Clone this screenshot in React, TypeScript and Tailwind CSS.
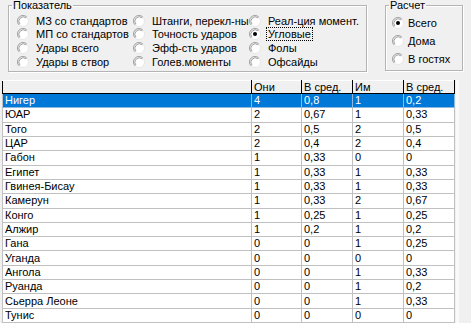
import React from "react";

const rows = [
  ["Нигер", "4", "0,8", "1", "0,2"],
  ["ЮАР", "2", "0,67", "1", "0,33"],
  ["Того", "2", "0,5", "2", "0,5"],
  ["ЦАР", "2", "0,4", "2", "0,4"],
  ["Габон", "1", "0,33", "0", "0"],
  ["Египет", "1", "0,33", "1", "0,33"],
  ["Гвинея-Бисау", "1", "0,33", "1", "0,33"],
  ["Камерун", "1", "0,33", "2", "0,67"],
  ["Конго", "1", "0,25", "1", "0,25"],
  ["Алжир", "1", "0,2", "1", "0,2"],
  ["Гана", "0", "0", "1", "0,25"],
  ["Уганда", "0", "0", "0", "0"],
  ["Ангола", "0", "0", "1", "0,33"],
  ["Руанда", "0", "0", "1", "0,2"],
  ["Сьерра Леоне", "0", "0", "1", "0,33"],
  ["Тунис", "0", "0", "0", "0"],
];

const Radio = ({checked = false}: {checked?: boolean}) => (
  <svg width="12" height="12" viewBox="0 0 12 12" className="shrink-0">
    <circle cx="6" cy="6" r="5.5" fill="#ffffff" stroke="#e6e6e6" strokeWidth="1" />
    <path d="M2.1 9.9 A5.5 5.5 0 0 1 9.9 2.1" fill="none" stroke="#a0a0a0" strokeWidth="1" />
    <path d="M2.9 9.1 A4.4 4.4 0 0 1 9.1 2.9" fill="none" stroke="#8a8a8a" strokeWidth="0.8" />
    {checked && <circle cx="6" cy="6" r="2" fill="#000000" />}
  </svg>
);

const Option = ({label, checked, focus}: {label: string; checked?: boolean; focus?: boolean}) => (
  <div className="flex items-center h-[13.6px] leading-[12px] whitespace-nowrap">
    <Radio checked={checked} />
    <span className={focus ? "ml-[6px] px-[1px] outline outline-1 outline-dotted outline-black" : "ml-[7px]"}>
      {label}
    </span>
  </div>
);

const col1 = ["МЗ со стандартов", "МП со стандартов", "Удары всего", "Удары в створ"];
const col2 = ["Штанги, перекл-ны", "Точность ударов", "Эфф-сть ударов", "Голев.моменты"];
const col3 = ["Реал-ция момент.", "Угловые", "Фолы", "Офсайды"];

export default function App() {
  return (
    <div
      className="w-[471px] h-[323px] bg-[#f0f0f0] overflow-hidden text-[11px] text-black"
      style={{fontFamily: '"Liberation Sans", Arial, sans-serif'}}
    >
      <div className="flex h-[80px]">
        <fieldset className="ml-[8px] w-[359px] h-[72px] border border-[#b4b4b4] shadow-[inset_1px_1px_0_#ffffff,1px_1px_0_#ffffff]">
          <legend className="ml-[3px] px-[1px] leading-[11px]">Показатель</legend>
          <div className="grid grid-cols-[116px_116px_110px] pl-[8px] pt-[3px]">
            <div>
              {col1.map((l) => (
                <Option key={l} label={l} />
              ))}
            </div>
            <div>
              {col2.map((l) => (
                <Option key={l} label={l} />
              ))}
            </div>
            <div>
              {col3.map((l, i) => (
                <Option key={l} label={l} checked={i === 1} focus={i === 1} />
              ))}
            </div>
          </div>
        </fieldset>
        <fieldset className="ml-[18px] w-[78px] h-[71px] border border-[#b4b4b4] shadow-[inset_1px_1px_0_#ffffff,1px_1px_0_#ffffff]">
          <legend className="ml-[3px] px-[1px] leading-[11px]">Расчет</legend>
          <div className="flex flex-col gap-[5px] pl-[6px] pt-[5px]">
            {["Всего", "Дома", "В гостях"].map((l, i) => (
              <div key={l} className="flex items-center h-[13px] leading-[12px] whitespace-nowrap">
                <Radio checked={i === 0} />
                <span className="ml-[4px]">{l}</span>
              </div>
            ))}
          </div>
        </fieldset>
      </div>

      <div className="flex">
        <table className="ml-[2px] border-collapse table-fixed w-[452px] bg-white">
          <colgroup>
            <col className="w-[249px]" />
            <col className="w-[50px]" />
            <col className="w-[51px]" />
            <col className="w-[51px]" />
            <col className="w-[51px]" />
          </colgroup>
          <thead>
            <tr className="h-[13px] bg-[#f0f0f0]">
              {["", "Они", "В сред.", "Им", "В сред."].map((h, i) => (
                <th
                  key={i}
                  className={
                    "p-0 pl-[2px] text-left font-normal leading-[12px] border-t border-t-white border-b border-b-black border-r border-r-black " +
                    (i === 0 ? "border-l border-l-black" : "border-l border-l-white")
                  }
                >
                  {h}
                </th>
              ))}
            </tr>
          </thead>
          <tbody>
            {rows.map((r, ri) => (
              <tr key={ri} className={ri === 0 ? "h-[14px] bg-[#0078d7] text-white" : "h-[14px]"}>
                {r.map((c, ci) => (
                  <td
                    key={ci}
                    className={
                      "p-0 pl-[2px] leading-[13px] whitespace-nowrap border-b border-r " +
                      (ri === 0 ? "border-[#8fb8e0] " : "border-[#c0c0c0] ") +
                      (ci === 0 ? "border-l border-l-[#c0c0c0]" : "")
                    }
                  >
                    {c}
                  </td>
                ))}
              </tr>
            ))}
          </tbody>
        </table>
        <div className="w-[3px] ml-[1px] h-[243px] bg-[#fafafa]" />
      </div>
    </div>
  );
}
